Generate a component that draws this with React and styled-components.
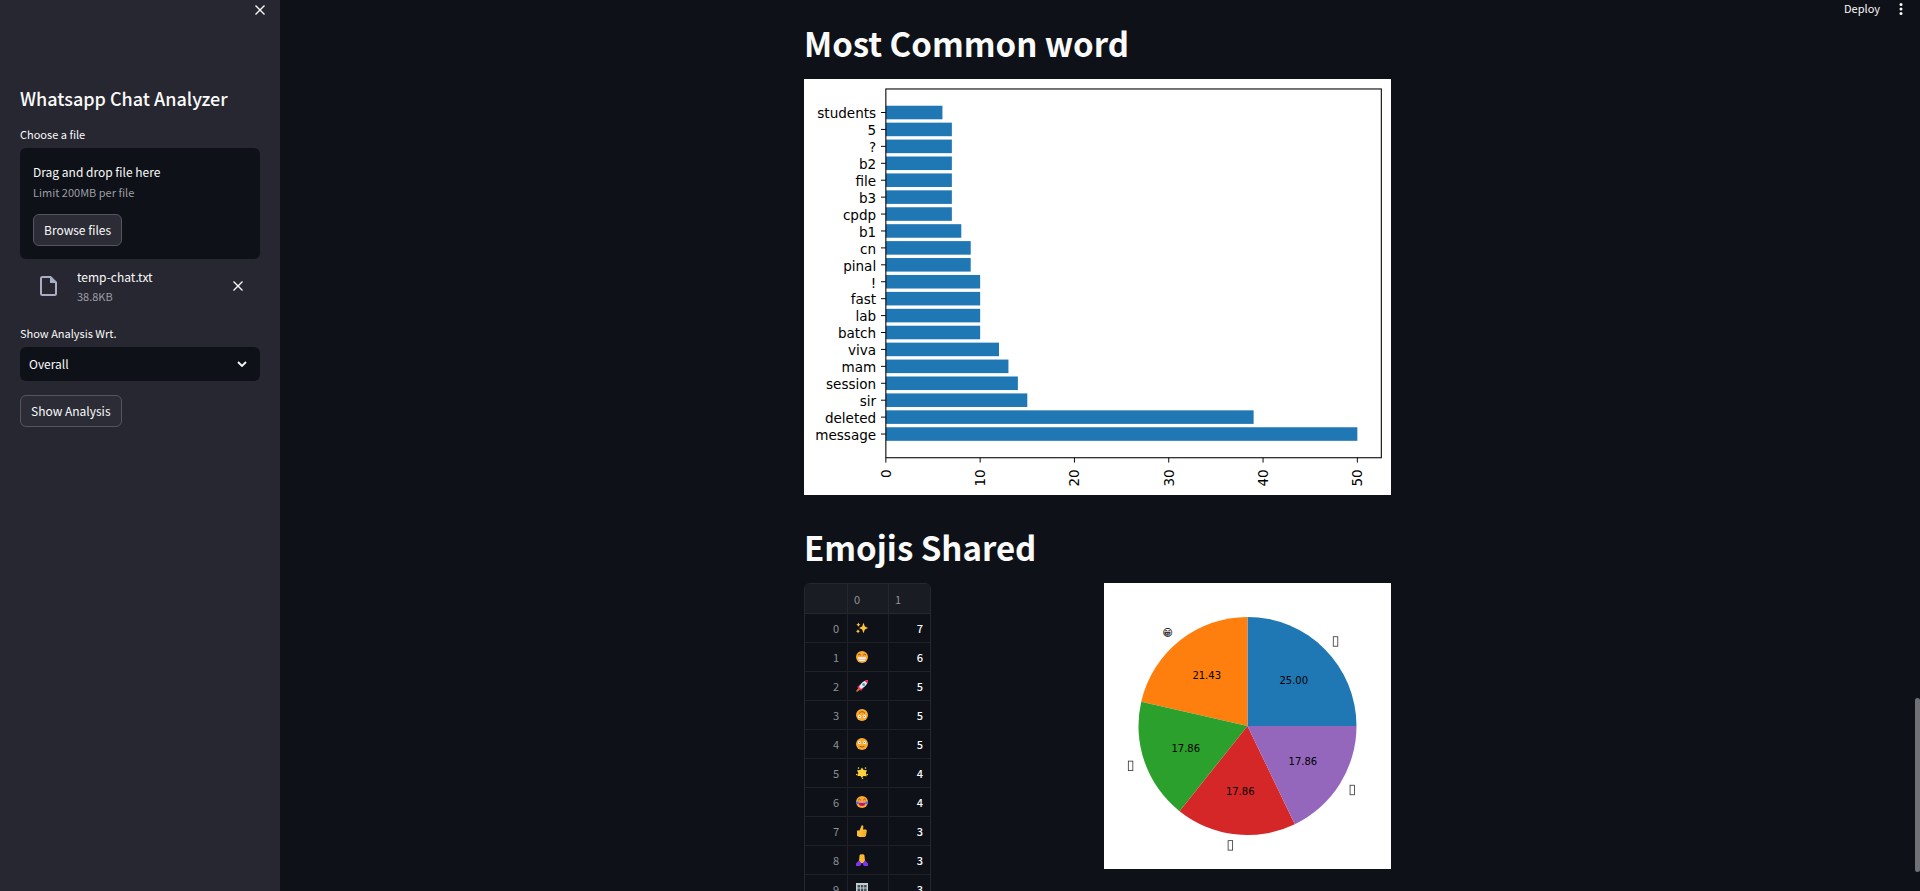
import React, { useRef } from "react";
import styled, { createGlobalStyle } from "styled-components";

const Global = createGlobalStyle`
  * { box-sizing: border-box; }
  body { margin: 0; background: #0e1117; }
  body, button, select, input { font-family: "Noto Sans CJK SC", "Open Sans", sans-serif; font-weight: 400; }
`;

const Shell = styled.div`
  display: flex;
  height: 100vh;
  overflow: hidden;
  color: #fafafa;
`;

const Sidebar = styled.aside`
  flex: 0 0 280px;
  background: #262730;
  padding: 0 20px;
`;

const SidebarTop = styled.div`
  display: flex;
  justify-content: flex-end;
  height: 83px;
  padding-top: 3px;
  margin-right: -7px;
`;

const IconButton = styled.button`
  display: grid;
  place-items: center;
  width: 14px;
  height: 14px;
  padding: 0;
  border: 0;
  background: none;
  color: inherit;
  cursor: pointer;
`;

const SidebarTitle = styled.h2`
  margin: 0 0 14px;
  font-size: 18px;
  line-height: 30px;
  font-weight: 500;
`;

const FieldLabel = styled.label`
  display: block;
  margin-bottom: 7px;
  font-size: 11px;
  line-height: 14px;
`;

const DropZone = styled.section`
  display: flex;
  flex-direction: column;
  align-items: flex-start;
  border-radius: 6px;
  background: #0e1117;
  padding: 14px 13px 13px;
`;

const HiddenInput = styled.input`
  position: absolute;
  width: 1px;
  height: 1px;
  opacity: 0;
  overflow: hidden;
`;

const Body = styled.span`
  font-size: 12px;
  line-height: 20px;
`;

const Small = styled.span`
  font-size: 11px;
  line-height: ${(p) => (p.$tight ? 18 : 20)}px;
  color: #9c9ea4;
`;

const Button = styled.button`
  height: 32px;
  padding: 0 10px;
  border: 1px solid #54555e;
  border-radius: 6px;
  background: #2b2c36;
  color: #fafafa;
  font-size: 12px;
  line-height: 20px;
  cursor: pointer;
`;

const BrowseButton = styled(Button)`
  margin-top: 12px;
`;

const UploadedFile = styled.div`
  display: flex;
  align-items: center;
  padding: 8px 15px 8px 20px;
  margin-bottom: 13px;
`;

const FileText = styled.div`
  display: flex;
  flex-direction: column;
  flex: 1;
  margin-left: 19px;
`;

const SelectBox = styled.div`
  display: grid;
  align-items: center;
  margin-bottom: 14px;
  & > * { grid-area: 1 / 1; }
  & > svg { justify-self: end; margin-right: 13px; pointer-events: none; }
`;

const Select = styled.select`
  appearance: none;
  width: 100%;
  height: 34px;
  border: 0;
  border-radius: 6px;
  padding: 0 9px 2px;
  background: #0e1117;
  color: #fafafa;
  font-size: 12px;
`;

const Main = styled.main`
  position: relative;
  flex: 1;
  min-width: 0;
  overflow: hidden;
  padding-right: 5px;
`;

const Toolbar = styled.header`
  display: flex;
  justify-content: flex-end;
  align-items: center;
  gap: 14px;
  height: 17px;
  padding-right: 7px;
`;

const DeployButton = styled.button`
  padding: 0;
  border: 0;
  background: none;
  color: inherit;
  font-size: 11px;
  line-height: 17px;
  cursor: pointer;
`;

const ScrollThumb = styled.div`
  position: absolute;
  right: 0;
  bottom: 19px;
  width: 5px;
  height: 174px;
  border-radius: 3px;
  background: #6f7176;
`;

const Content = styled.div`
  width: 100%;
  max-width: 587px;
  margin: 0 auto;
  padding-top: 6px;
`;

const Heading = styled.h1`
  margin: 0 0 16px;
  font-size: 33px;
  line-height: 40px;
  font-weight: 700;
`;

const Figure = styled.figure`
  margin: 0 0 32px;
  background: #fff;
  & > svg { display: block; width: 100%; height: auto; }
`;

const Columns = styled.div`
  display: grid;
  grid-template-columns: 1fr 1fr;
  align-items: start;
  gap: 13px;
`;

const TableFrame = styled.div`
  width: 127px;
  border: 1px solid #26282e;
  border-radius: 6px;
  overflow: hidden;
`;

const Table = styled.table`
  width: 100%;
  table-layout: fixed;
  border-collapse: separate;
  border-spacing: 0;
  font-size: 11px;
  line-height: 16px;
`;

const Cell = styled.td`
  height: 29px;
  padding: 0 ${(p) => (p.$last ? 7 : 8)}px;
  border-right: ${(p) => (p.$last ? 0 : 1)}px solid #1f2127;
  border-bottom: 1px solid #1f2127;
  text-align: ${(p) => p.$align || "right"};
  font-weight: ${(p) => (p.$muted ? 400 : 500)};
  color: ${(p) => (p.$muted ? "#8e9096" : "#fafafa")};
  & > svg { display: block; }
`;

const HeadCell = styled(Cell)`
  height: 30px;
  padding: 0 6px;
  background: #1a1c24;
  border-color: #26282e;
`;

const ChartText = styled.text`
  font-family: "DejaVu Sans", sans-serif;
  font-size: ${(p) => p.$size}px;
  font-weight: 400;
  fill: #000;
`;

const Cross = () => (
  <svg width="12" height="12" viewBox="0 0 12 12" stroke="currentColor" strokeWidth="1.4" fill="none" aria-hidden="true">
    <path d="M1.5 1.5 10.5 10.5M10.5 1.5 1.5 10.5" />
  </svg>
);

const FileIcon = () => (
  <svg width="18" height="20" viewBox="0 0 18 20" fill="none" aria-hidden="true">
    <path d="M2.5 1h8l5.500 5.500v11a1.500 1.500 0 0 1-1.500 1.500h-12A1.500 1.500 0 0 1 1 17.500v-15A1.500 1.500 0 0 1 2.500 1z" stroke="#a9aec4" strokeWidth="2" />
    <path d="M10 1v6h6z" fill="#a9aec4" />
  </svg>
);

const Chevron = () => (
  <svg width="10" height="6" viewBox="0 0 10 6" fill="none" stroke="#fafafa" strokeWidth="1.8" aria-hidden="true">
    <path d="M1 1l4 4 4-4" />
  </svg>
);

const Dots = () => (
  <svg width="12" height="12" viewBox="0 0 12 12" fill="#fafafa" aria-hidden="true">
    <circle cx="6" cy="1.500" r="1.500" />
    <circle cx="6" cy="6" r="1.500" />
    <circle cx="6" cy="10.500" r="1.500" />
  </svg>
);

const Face = () => <circle cx="6" cy="6" r="6" fill="#fbaa2c" />;

const emojiArt = {
  sparkles: (
    <g fill="#fcc440">
      <path d="M7.500.8 8.900 4.600 12 6 8.900 7.400 7.500 11.200 6.100 7.400 3 6 6.100 4.600z" />
      <path d="M2.400.6 3.100 2 4.400 2.700 3.100 3.400 2.400 4.800 1.700 3.400.4 2.700 1.700 2z" />
      <path d="M2 7.200 2.700 8.600 4 9.300 2.700 10 2 11.400 1.300 10 0 9.300 1.300 8.600z" />
    </g>
  ),
  grin: (
    <g>
      <Face />
      <path d="M2 6.200h8v1a3 3 0 0 1-3 2.800H5a3 3 0 0 1-3-2.800z" fill="#fff" />
      <path d="M2.100 8.200h7.800" stroke="#c46a80" strokeWidth=".6" />
      <path d="M2 4.200q1.400-2 2.800 0M7.200 4.200q1.400-2 2.800 0" stroke="#6b4426" fill="none" strokeWidth=".9" />
    </g>
  ),
  rocket: (
    <g>
      <path d="M1 7 4 4.500 7.500 8 5 11z" fill="#d51c59" />
      <path d="M3 7Q6 .5 12 0 11.500 6 5 9z" fill="#f1e9f2" />
      <path d="M8.500.8Q10 0 12 0 12 2 11.200 3.500z" fill="#e4265f" />
      <circle cx="7.600" cy="4.500" r="1.500" fill="#4da4c4" />
      <path d="M2.700 7.600 4.500 9.400 1 12 0 11z" fill="#d76737" />
    </g>
  ),
  upsideDown: (
    <g>
      <Face />
      <circle cx="3.500" cy="7.500" r="1.500" fill="#fff" />
      <circle cx="8.500" cy="7.500" r="1.500" fill="#fff" />
      <circle cx="3.800" cy="7.500" r=".6" fill="#5b4a42" />
      <circle cx="8.200" cy="7.500" r=".6" fill="#5b4a42" />
      <path d="M3 4.400Q6 .8 9 4.400" stroke="#6b4426" fill="none" strokeWidth=".8" />
    </g>
  ),
  smile: (
    <g>
      <Face />
      <circle cx="3.500" cy="4.500" r="1.500" fill="#fff" />
      <circle cx="8.500" cy="4.500" r="1.500" fill="#fff" />
      <circle cx="3.800" cy="4.500" r=".6" fill="#5b4a42" />
      <circle cx="8.200" cy="4.500" r=".6" fill="#5b4a42" />
      <path d="M3.500 8.300Q6 9.800 8.500 8.300" stroke="#6b4426" fill="none" strokeWidth=".8" />
    </g>
  ),
  star: (
    <g fill="#fdd23a">
      <path d="M6 .5 7.700 3 11 3.200 9.800 6 10.800 9.200 7.600 9 5.600 10.800 4.400 9 1.400 9 2.300 6 1 3.200 4.300 3z" />
      <circle cx="2.500" cy="1.100" r=".8" />
      <circle cx="9.500" cy="1.100" r=".8" />
      <circle cx=".8" cy="7.500" r=".8" />
      <circle cx="11.200" cy="7.500" r=".8" />
      <circle cx="6.500" cy="11.300" r=".7" />
    </g>
  ),
  joy: (
    <g>
      <Face />
      <path d="M2.300 5.800h7.400a3.700 4.300 0 0 1-7.400 0z" fill="#c1175c" />
      <path d="M2.700 5.800h6.600v.7H2.700z" fill="#fff" />
      <path d="M2.200 4.200q1.300-2 2.600 0M7.200 4.200q1.300-2 2.600 0" stroke="#6b4426" fill="none" strokeWidth=".8" />
      <circle cx="1.200" cy="6.900" r="1.300" fill="#4a72e8" />
      <circle cx="10.800" cy="6.900" r="1.300" fill="#4a72e8" />
    </g>
  ),
  thumb: (
    <g>
      <path d="M1 5.500h2.500L5.700.3q1.600-.5 1.700 1.500L7 4.500h2.800q1.200.3.900 1.600L10 10.600q-.2 1.400-1.800 1.400H3.500L1 11z" fill="#fcbd35" />
      <path d="M6.500 6.800h4M6.500 8.600h3.800M6.500 10.300h3.400" stroke="#e08f22" strokeWidth=".5" />
    </g>
  ),
  hands: (
    <g>
      <path d="M3.600 1.200Q4 0 5.400.2L6 .5 6.600.2Q8 0 8.400 1.200L9 6.500 7.500 9H4.500L3 6.500z" fill="#fcb92f" />
      <path d="M2.800 6.600 5.600 9.500 4 12H0V9.500z" fill="#7c36f2" />
      <path d="M9.200 6.600 6.400 9.500 8 12h4V9.500z" fill="#7c36f2" />
    </g>
  ),
  grid: (
    <g>
      <path d="M0 0h12v12H0z" fill="#c9cdd1" />
      <path d="M1.500 2h2.500v2.500H1.500zM4.800 2h2.500v2.500H4.800zM8.100 2h2.500v2.500H8.100zM1.500 5.500h2.500V8H1.500zM4.800 5.500h2.500V8H4.800zM8.100 5.500h2.500V8H8.100z" fill="#3c5258" />
    </g>
  ),
};

const rows = [
  ["sparkles", 7], ["grin", 6], ["rocket", 5], ["upsideDown", 5], ["smile", 5],
  ["star", 4], ["joy", 4], ["thumb", 3], ["hands", 3], ["grid", 3],
];

const words = [
  ["students", 6], ["5", 7], ["?", 7], ["b2", 7], ["file", 7], ["b3", 7], ["cpdp", 7],
  ["b1", 8], ["cn", 9], ["pinal", 9], ["!", 10], ["fast", 10], ["lab", 10], ["batch", 10],
  ["viva", 12], ["mam", 13], ["session", 14], ["sir", 15], ["deleted", 39], ["message", 50],
];

const AXIS = { left: 84.5, right: 596, top: 10.3, bottom: 391, first: 34.6, step: 17.47, unit: 9.735 };

function WordChart() {
  return (
    <svg viewBox="0 0 606 429.500" role="img" aria-label="Most common words">
      {words.map(([word, count], i) => {
        const y = AXIS.first + i * AXIS.step;
        return (
          <g key={word}>
            <rect x={AXIS.left} y={y - 7} width={count * AXIS.unit} height="14" fill="#1f77b4" />
            <path d={`M${AXIS.left - 5} ${y}h5`} stroke="#000" />
            <ChartText $size={14} x={AXIS.left - 10} y={y + 6} textAnchor="end">{word}</ChartText>
          </g>
        );
      })}
      {[0, 10, 20, 30, 40, 50].map((n) => {
        const x = AXIS.left + n * AXIS.unit;
        return (
          <g key={n}>
            <path d={`M${x} ${AXIS.bottom}v5`} stroke="#000" />
            <ChartText $size={14} textAnchor="end" transform={`translate(${x + 5} ${AXIS.bottom + 12}) rotate(-90)`}>{n}</ChartText>
          </g>
        );
      })}
      <rect x={AXIS.left} y={AXIS.top} width={AXIS.right - AXIS.left} height={AXIS.bottom - AXIS.top} fill="none" stroke="#000" strokeWidth="1.100" />
    </svg>
  );
}

const slices = [
  [25, "#1f77b4"], [21.43, "#ff7f0e"], [17.86, "#2ca02c"], [17.86, "#d62728"], [17.86, "#9467bd"],
];

function PieChart() {
  const cx = 143.5, cy = 143, r = 109;
  const at = (turn, radius) => [
    cx + radius * Math.cos(turn * 2 * Math.PI),
    cy - radius * Math.sin(turn * 2 * Math.PI),
  ];
  let start = 0;
  return (
    <svg viewBox="0 0 287 286" role="img" aria-label="Share of each emoji">
      {slices.map(([share, color], i) => {
        const end = start + share / 100;
        const mid = (start + end) / 2;
        const [x1, y1] = at(start, r);
        const [x2, y2] = at(end, r);
        const [tx, ty] = at(mid, r * 0.6);
        const [lx, ly] = at(mid, r * 1.1);
        const leftSide = lx < cx;
        start = end;
        return (
          <g key={i}>
            <path d={`M${cx} ${cy}L${x1} ${y1}A${r} ${r} 0 0 0 ${x2} ${y2}z`} fill={color} />
            <ChartText $size={10} x={tx} y={ty + 4} textAnchor="middle">{share.toFixed(2)}</ChartText>
            {i === 1 ? (
              <ChartText $size={10} x={lx} y={ly + 4} textAnchor="end">{"\u{1F601}\uFE0E"}</ChartText>
            ) : (
              <rect x={leftSide ? lx - 6 : lx + 1} y={ly - 4.5} width="4.500" height="9.500" fill="none" stroke="#333" strokeWidth=".8" />
            )}
          </g>
        );
      })}
    </svg>
  );
}

export default function App() {
  const fileInput = useRef(null);
  return (
    <>
      <Global />
      <Shell>
        <Sidebar>
          <SidebarTop>
            <IconButton type="button" aria-label="Close sidebar"><Cross /></IconButton>
          </SidebarTop>
          <SidebarTitle>Whatsapp Chat Analyzer</SidebarTitle>
          <FieldLabel htmlFor="chat-file">Choose a file</FieldLabel>
          <DropZone>
            <HiddenInput id="chat-file" type="file" ref={fileInput} tabIndex={-1} />
            <Body>Drag and drop file here</Body>
            <Small>Limit 200MB per file</Small>
            <BrowseButton type="button" onClick={() => fileInput.current.click()}>Browse files</BrowseButton>
          </DropZone>
          <UploadedFile>
            <FileIcon />
            <FileText>
              <Body>temp-chat.txt</Body>
              <Small $tight>38.8KB</Small>
            </FileText>
            <IconButton type="button" aria-label="Remove file"><Cross /></IconButton>
          </UploadedFile>
          <FieldLabel htmlFor="analysis-user">Show Analysis Wrt.</FieldLabel>
          <SelectBox>
            <Select id="analysis-user" defaultValue="Overall">
              <option>Overall</option>
            </Select>
            <Chevron />
          </SelectBox>
          <Button type="button">Show Analysis</Button>
        </Sidebar>
        <Main>
          <Toolbar>
            <DeployButton type="button">Deploy</DeployButton>
            <IconButton type="button" aria-label="Menu"><Dots /></IconButton>
          </Toolbar>
          <Content>
            <Heading>Most Common word</Heading>
            <Figure><WordChart /></Figure>
            <Heading>Emojis Shared</Heading>
            <Columns>
              <TableFrame>
                <Table>
                  <colgroup>
                    <col width="43" />
                    <col width="41" />
                    <col width="41" />
                  </colgroup>
                  <thead>
                    <tr>
                      <HeadCell as="th" $muted />
                      <HeadCell as="th" $muted $align="left">0</HeadCell>
                      <HeadCell as="th" $muted $align="left" $last>1</HeadCell>
                    </tr>
                  </thead>
                  <tbody>
                    {rows.map(([name, count], i) => (
                      <tr key={name}>
                        <Cell $muted>{i}</Cell>
                        <Cell $align="left">
                          <svg width="12" height="12" viewBox="0 0 12 12" role="img" aria-label={name}>{emojiArt[name]}</svg>
                        </Cell>
                        <Cell $last>{count}</Cell>
                      </tr>
                    ))}
                  </tbody>
                </Table>
              </TableFrame>
              <Figure><PieChart /></Figure>
            </Columns>
          </Content>
          <ScrollThumb />
        </Main>
      </Shell>
    </>
  );
}
